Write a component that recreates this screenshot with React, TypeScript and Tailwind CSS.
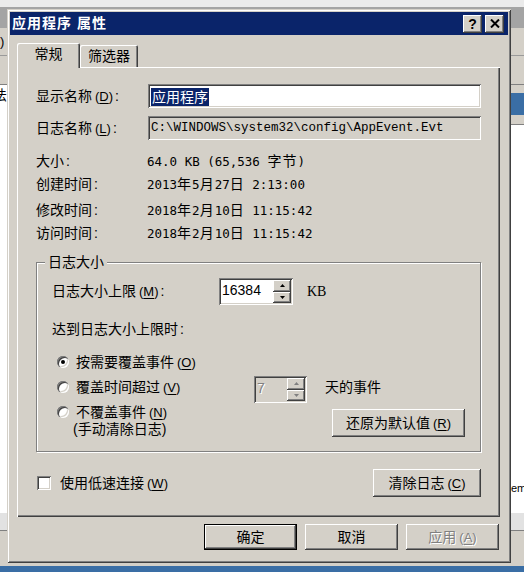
import React from 'react';

// classic 3D borders
const raised =
  'shadow-[inset_-1px_-1px_0_#404040,inset_1px_1px_0_#ffffff,inset_-2px_-2px_0_#808080,inset_2px_2px_0_#d4d0c8]';
const sunken =
  'shadow-[inset_1px_1px_0_#808080,inset_-1px_-1px_0_#ffffff,inset_2px_2px_0_#404040,inset_-2px_-2px_0_#d4d0c8]';
const windowBorder =
  'shadow-[inset_1px_1px_0_#d4d0c8,inset_-1px_-1px_0_#404040,inset_2px_2px_0_#ffffff,inset_-2px_-2px_0_#808080]';

const cjk = /[\u3400-\u9fff]/;

// values use half-width ascii and full-width hanzi
function Mixed({ text }: { text: string }) {
  const parts = text.split(/([\u3400-\u9fff]+)/);
  return (
    <span className="whitespace-pre font-['DejaVu_Sans_Mono','Noto_Sans_CJK_SC',monospace] text-[12.5px]">
      {parts.map((p, i) =>
        cjk.test(p) ? (
          <span key={i} className="font-['Noto_Sans_CJK_SC',sans-serif] text-[14px] tracking-[1px]">
            {p}
          </span>
        ) : (
          <span key={i}>{p}</span>
        )
      )}
    </span>
  );
}

function Acc({ text, k, colon }: { text: string; k: string; colon?: boolean }) {
  return (
    <span className="whitespace-nowrap">
      {text}
      <span className="ml-[3px] text-[13px]">
        (<u className="underline-offset-2">{k}</u>)
      </span>
      {colon && <span className="ml-[2px]">:</span>}
    </span>
  );
}

function Radio({ checked }: { checked?: boolean }) {
  return (
    <div className="w-[12px] h-[12px] shrink-0 rounded-full bg-white flex items-center justify-center shadow-[inset_1px_1px_0_#808080,inset_2px_2px_0_#404040,inset_-1px_-1px_0_#ffffff,inset_-2px_-2px_0_#d4d0c8]">
      {checked && <div className="w-[4px] h-[4px] rounded-full bg-black" />}
    </div>
  );
}

function Spin({ value, disabled, width }: { value: string; disabled?: boolean; width: string }) {
  const arrow = disabled ? '#808080' : '#000000';
  return (
    <div className={`flex h-[27px] p-[2px] ${width} ${disabled ? 'bg-[#d4d0c8]' : 'bg-white'} ${sunken}`}>
      <div
        className={`flex-1 pl-[1px] pt-[1px] text-[14px] leading-[18px] font-['Liberation_Sans',sans-serif] ${
          disabled ? 'text-[#808080] [text-shadow:1px_1px_0_#ffffff]' : ''
        }`}
      >
        {value}
      </div>
      <div className="w-[18px] flex flex-col">
        <div className={`flex-1 bg-[#d4d0c8] flex items-center justify-center ${raised}`}>
          <svg width="5" height="3" viewBox="0 0 5 3">
            <path d="M2.5 0L5 3H0Z" fill={arrow} />
          </svg>
        </div>
        <div className={`flex-1 bg-[#d4d0c8] flex items-center justify-center ${raised}`}>
          <svg width="5" height="3" viewBox="0 0 5 3">
            <path d="M0 0H5L2.5 3Z" fill={arrow} />
          </svg>
        </div>
      </div>
    </div>
  );
}

function Button({
  children,
  width,
  height,
  isDefault,
  disabled,
}: {
  children: React.ReactNode;
  width: string;
  height: string;
  isDefault?: boolean;
  disabled?: boolean;
}) {
  return (
    <div
      className={`${width} ${height} bg-[#d4d0c8] flex items-center justify-center text-[14px] ${raised} ${
        isDefault ? 'border border-black' : ''
      } ${disabled ? 'text-[#808080] [text-shadow:1px_1px_0_#ffffff]' : ''}`}
    >
      {children}
    </div>
  );
}

function InfoRow({ label, value, mt }: { label: string; value: string; mt: string }) {
  return (
    <div className={`flex items-center h-[20px] ${mt}`}>
      <span className="w-[111px]">
        {label}
        <span className="ml-[2px]">:</span>
      </span>
      <Mixed text={value} />
    </div>
  );
}

export default function App() {
  return (
    <div className="relative w-[524px] h-[572px] overflow-hidden bg-[#d4d0c8] text-black font-['Liberation_Sans','Noto_Sans_CJK_SC',sans-serif] text-[14px]">
      {/* app window behind the dialog */}
      <div className="flex flex-col h-full">
        <div className="h-[7px] bg-[#ebebeb]" />
        <div className="h-[21px] bg-[#a4a4a4]" />
        <div className="h-[28px] bg-[#d4d0c8] border-b border-[#9a9a9a] text-[13px] leading-[28px]">)</div>
        <div className="h-[29px] bg-[#d4d0c8] border-b border-[#808080]" />
        <div className="flex flex-1">
          <div className="w-[7px] bg-white overflow-hidden">
            <div className="-ml-[7px] mt-[1px] text-[14px] leading-[18px]">法</div>
          </div>
          <div className="flex-1" />
          <div className="w-[14px] flex flex-col">
            <div className="h-[8px] bg-[#d4d0c8]" />
            <div className="h-[22px] bg-[#3a6ea5]" />
            <div className="h-[10px] bg-[#d4d0c8] border-b border-[#808080]" />
            <div className="flex-1 bg-white flex flex-col justify-end pb-[18px]">
              <span className="text-[11px] leading-[14px] pl-[1px]">em</span>
            </div>
          </div>
        </div>
        <div className="h-[17px] bg-[#e2e2e2]" />
        <div className="h-[36px] bg-[#d4d0c8] border-t border-[#808080]" />
        <div className="h-[6px] bg-[#3a6ea5]" />
      </div>

      {/* dialog */}
      <div className={`absolute left-[7px] top-[9px] w-[504px] h-[554px] bg-[#d4d0c8] p-[3px] flex flex-col ${windowBorder}`}>
        <div className="h-[23px] bg-[#0a246a] flex items-center justify-between pl-[2px] pr-[4px]">
          <span className="text-white font-bold text-[14px] leading-[23px] tracking-[1px]">应用程序 属性</span>
          <div className="flex gap-[3px]">
            <div className={`w-[19px] h-[18px] bg-[#d4d0c8] flex items-center justify-center ${raised}`}>
              <span className="font-bold text-[14px] leading-none">?</span>
            </div>
            <div className={`w-[19px] h-[18px] bg-[#d4d0c8] flex items-center justify-center ${raised}`}>
              <svg width="10" height="9" viewBox="0 0 10 9">
                <path d="M1 0.5L9 8.5M9 0.5L1 8.5" stroke="#000" strokeWidth="2" />
              </svg>
            </div>
          </div>
        </div>

        <div className="flex flex-col px-[7px] pt-[8px]">
          {/* tabs */}
          <div className="flex items-end h-[24px]">
            <div className="relative z-10 -mb-[1px] w-[63px] h-[25px] bg-[#d4d0c8] rounded-t-[2px] flex items-center justify-center pb-[2px] shadow-[inset_1px_1px_0_#ffffff,inset_-1px_0_0_#404040,inset_-2px_0_0_#808080]">
              常规
            </div>
            <div className="w-[58px] h-[22px] bg-[#d4d0c8] rounded-t-[2px] flex items-center justify-center shadow-[inset_1px_1px_0_#ffffff,inset_-1px_0_0_#404040,inset_-2px_0_0_#808080]">
              筛选器
            </div>
          </div>

          {/* tab page */}
          <div className="w-[483px] h-[450px] flex flex-col pl-[19px] pt-[17px] shadow-[inset_1px_1px_0_#ffffff,inset_-1px_-1px_0_#404040,inset_-2px_-2px_0_#808080]">
            <div className="flex items-center h-[24px]">
              <span className="w-[112px]">
                <Acc text="显示名称" k="D" colon />
              </span>
              <div className={`w-[333px] h-[24px] bg-white p-[3px] ${sunken}`}>
                <span className="bg-[#0a246a] text-white leading-[18px] inline-block px-[1px]">应用程序</span>
              </div>
            </div>
            <div className="flex items-center h-[24px] mt-[8px]">
              <span className="w-[112px]">
                <Acc text="日志名称" k="L" colon />
              </span>
              <div className={`w-[333px] h-[24px] bg-[#d4d0c8] px-[3px] flex items-center ${sunken}`}>
                <span className="font-['Liberation_Mono',monospace] text-[12.5px]">C:\WINDOWS\system32\config\AppEvent.Evt</span>
              </div>
            </div>

            <InfoRow label="大小" value="64.0 KB (65,536 字节)" mt="mt-[11px]" />
            <InfoRow label="创建时间" value="2013年5月27日 2:13:00" mt="mt-[3px]" />
            <InfoRow label="修改时间" value="2018年2月10日 11:15:42" mt="mt-[6px]" />
            <InfoRow label="访问时间" value="2018年2月10日 11:15:42" mt="mt-[3px]" />

            {/* group box */}
            <div className="relative mt-[19px] w-[445px] h-[190px] border border-[#808080] shadow-[inset_1px_1px_0_#ffffff,1px_1px_0_#ffffff] pl-[15px] pt-[15px] flex flex-col">
              <span className="absolute -top-[10px] left-[8px] px-[3px] bg-[#d4d0c8] leading-[18px]">日志大小</span>

              <div className="flex items-center h-[27px]">
                <span className="w-[167px]">
                  <Acc text="日志大小上限" k="M" colon />
                </span>
                <Spin value="16384" width="w-[74px]" />
                <span className="ml-[14px] font-['Liberation_Serif',serif] text-[14px]">KB</span>
              </div>

              <div className="mt-[15px] h-[18px] leading-[18px]">
                达到日志大小上限时<span className="ml-[2px]">:</span>
              </div>

              <div className="flex flex-col pl-[5px]">
                <div className="mt-[14px] h-[20px] flex items-center gap-[7px]">
                  <Radio checked />
                  <Acc text="按需要覆盖事件" k="O" />
                </div>

                <div className="mt-[4px] h-[27px] flex items-start">
                  <div className="w-[197px] h-[20px] mt-[1px] flex items-center gap-[7px]">
                    <Radio />
                    <Acc text="覆盖时间超过" k="V" />
                  </div>
                  <Spin value="7" disabled width="w-[53px]" />
                  <span className="ml-[18px] mt-[1px] leading-[20px]">天的事件</span>
                </div>

                <div className="flex items-start">
                  <div className="w-[275px] mt-[1px] flex items-start gap-[7px]">
                    <div className="h-[16px] flex items-center">
                      <Radio />
                    </div>
                    <div className="flex flex-col leading-[16px]">
                      <Acc text="不覆盖事件" k="N" />
                      <span className="-ml-[3px]">(手动清除日志)</span>
                    </div>
                  </div>
                  <div className="mt-[6px]">
                    <Button width="w-[133px]" height="h-[28px]">
                      <Acc text="还原为默认值" k="R" />
                    </Button>
                  </div>
                </div>
              </div>
            </div>

            <div className="mt-[17px] w-[445px] h-[28px] flex items-center justify-between">
              <div className="flex items-center gap-[9px] pl-[1px]">
                <div className={`w-[14px] h-[14px] bg-white ${sunken}`} />
                <Acc text="使用低速连接" k="W" />
              </div>
              <Button width="w-[108px]" height="h-[28px]">
                <Acc text="清除日志" k="C" />
              </Button>
            </div>
          </div>

          {/* dialog buttons */}
          <div className="mt-[7px] flex justify-end gap-[8px] pr-[2px]">
            <Button width="w-[93px]" height="h-[26px]" isDefault>
              确定
            </Button>
            <Button width="w-[93px]" height="h-[26px]">
              取消
            </Button>
            <Button width="w-[93px]" height="h-[26px]" disabled>
              <Acc text="应用" k="A" />
            </Button>
          </div>
        </div>
      </div>
    </div>
  );
}
